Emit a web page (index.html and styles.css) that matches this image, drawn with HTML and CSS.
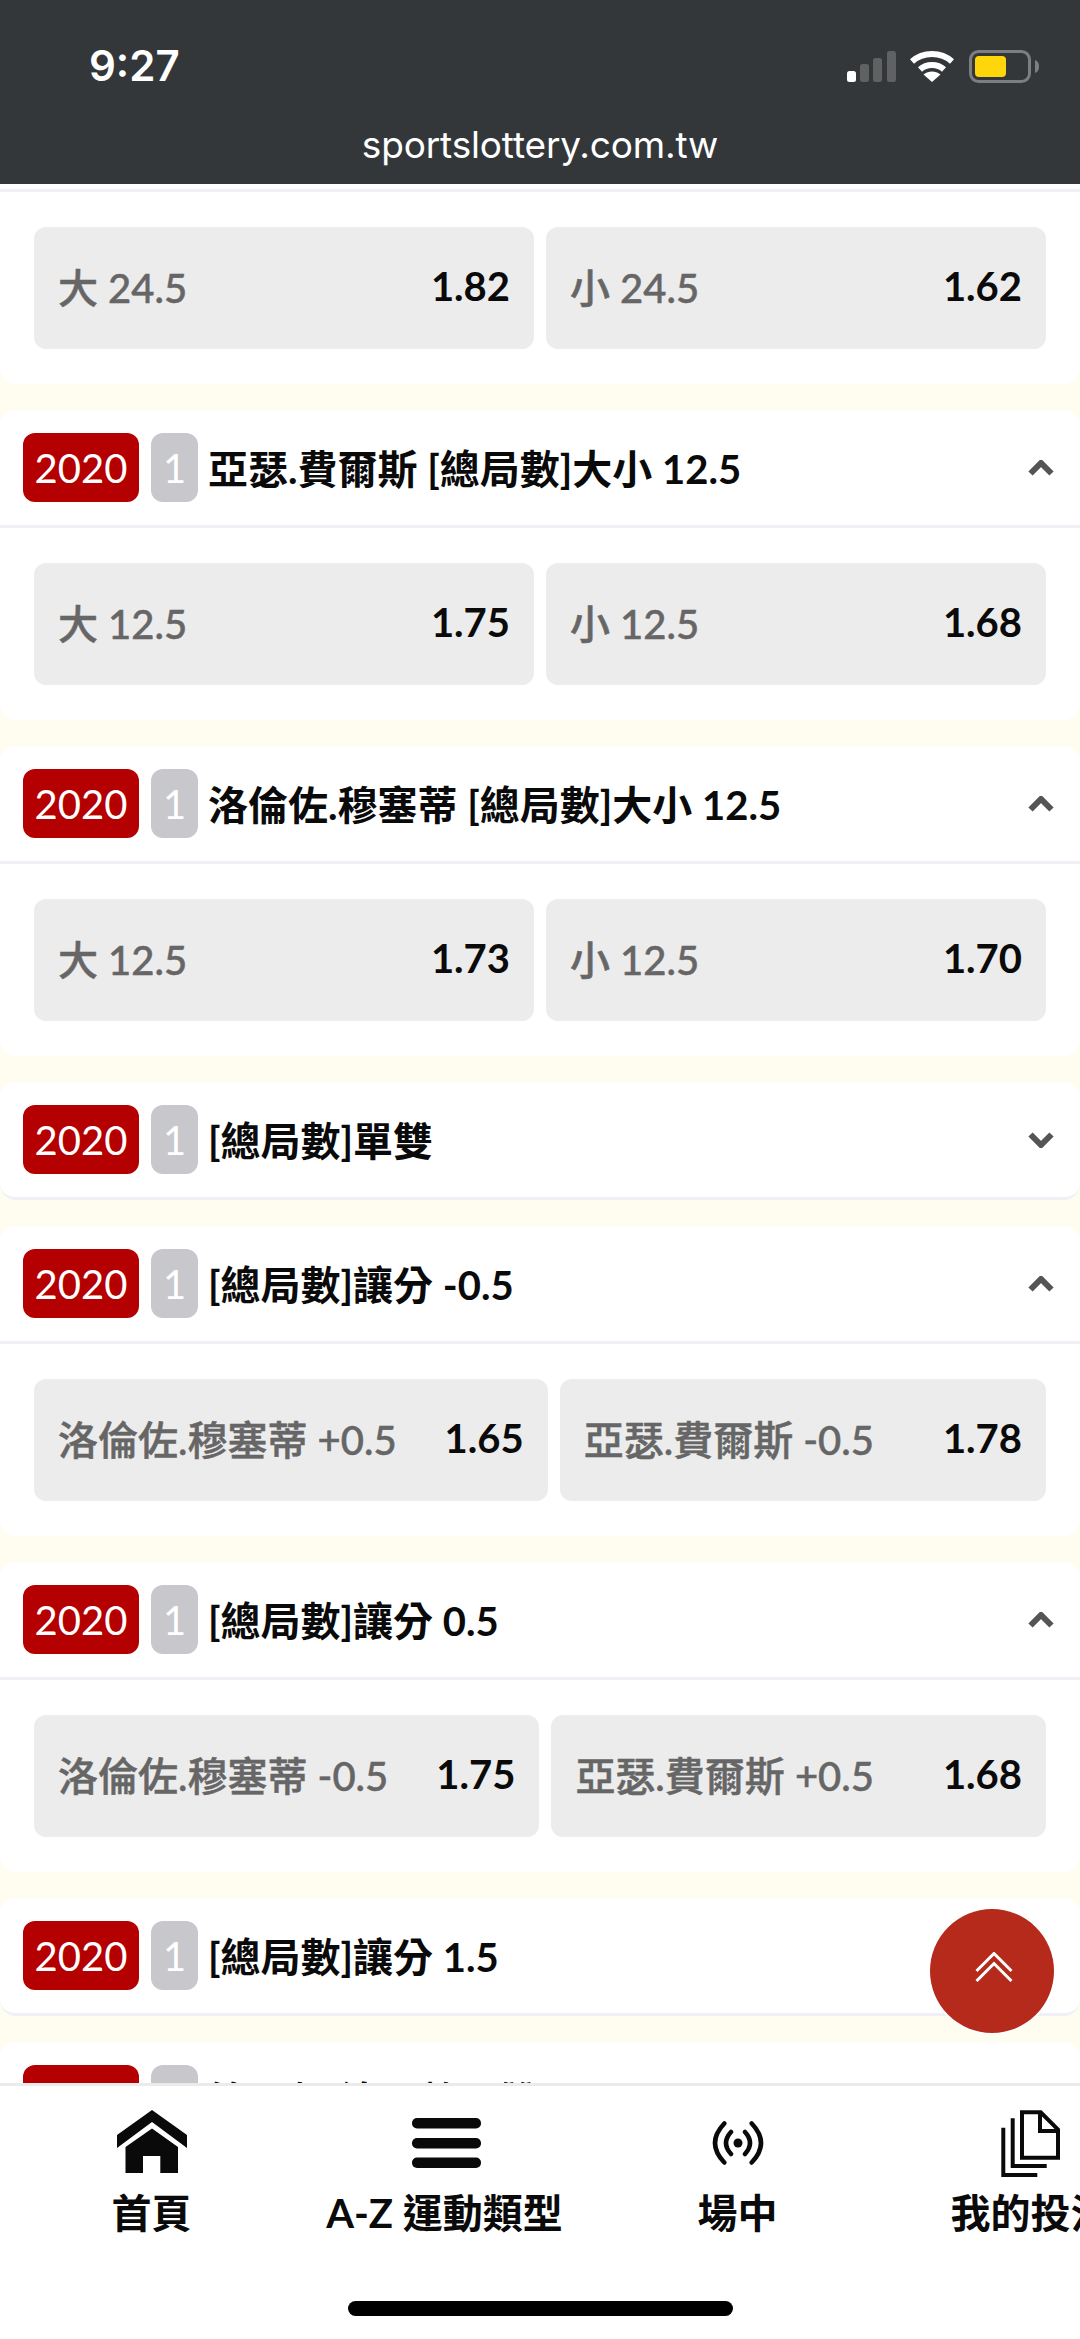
FILE: index.html
```html
<!DOCTYPE html>
<html lang="zh-Hant">
<head>
<meta charset="utf-8">
<title>sportslottery.com.tw</title>
<link rel="stylesheet" href="styles.css">
</head>
<body>
<div class="screen">
  <header class="browser-bar">
    <div class="status">
      <span class="clock">9:27</span>
      <div class="status-icons">
        <svg class="signal" viewBox="0 0 49 31" width="49" height="31">
          <rect x="0" y="20" width="9" height="11" rx="2.5" fill="#fff"/>
          <rect x="13" y="13" width="9" height="18" rx="2.5" fill="#5f6163"/>
          <rect x="26" y="7" width="9" height="24" rx="2.5" fill="#5f6163"/>
          <rect x="40" y="0" width="9" height="31" rx="2.5" fill="#5f6163"/>
        </svg>
        <svg class="wifi" viewBox="0 0 44 32" width="44" height="32">
          <path d="M2 11.5C13 1.5 31 1.5 42 11.5" fill="none" stroke="#fff" stroke-width="6"/>
          <path d="M10 19.5C16.500 13.500 27.500 13.500 34 19.500" fill="none" stroke="#fff" stroke-width="6"/>
          <path d="M22 32L13.500 24.500C18.500 20.500 25.500 20.500 30.500 24.500Z" fill="#fff"/>
        </svg>
        <svg class="battery" viewBox="0 0 70 33" width="70" height="33">
          <rect x="1.500" y="1.500" width="59" height="30" rx="8" fill="none" stroke="#7c7e80" stroke-width="3"/>
          <rect x="6" y="6" width="31" height="21" rx="4" fill="#ffd60a"/>
          <path d="M66 10C69 11 70 13.500 70 16.500C70 19.500 69 22 66 23Z" fill="#7c7e80"/>
        </svg>
      </div>
    </div>
    <div class="address">sportslottery.com.tw</div>
  </header>

  <main class="market-list">
    <section class="market market-cut">
      <div class="odds-row">
        <button class="pick"><span class="pick-label">大 24.5</span><span class="pick-odds">1.82</span></button>
        <button class="pick"><span class="pick-label">小 24.5</span><span class="pick-odds">1.62</span></button>
      </div>
    </section>

    <section class="market">
      <div class="market-head">
        <span class="tag tag-year">2020</span><span class="tag tag-set">1</span>
        <h2 class="market-title">亞瑟.費爾斯 [總局數]大小 12.5</h2>
        <svg class="caret" viewBox="0 0 26 16" width="26" height="16"><path d="M2.500 13.500L13 3L23.500 13.500"/></svg>
      </div>
      <div class="odds-row">
        <button class="pick"><span class="pick-label">大 12.5</span><span class="pick-odds">1.75</span></button>
        <button class="pick"><span class="pick-label">小 12.5</span><span class="pick-odds">1.68</span></button>
      </div>
    </section>

    <section class="market">
      <div class="market-head">
        <span class="tag tag-year">2020</span><span class="tag tag-set">1</span>
        <h2 class="market-title">洛倫佐.穆塞蒂 [總局數]大小 12.5</h2>
        <svg class="caret" viewBox="0 0 26 16" width="26" height="16"><path d="M2.500 13.500L13 3L23.500 13.500"/></svg>
      </div>
      <div class="odds-row">
        <button class="pick"><span class="pick-label">大 12.5</span><span class="pick-odds">1.73</span></button>
        <button class="pick"><span class="pick-label">小 12.5</span><span class="pick-odds">1.70</span></button>
      </div>
    </section>

    <section class="market">
      <div class="market-head">
        <span class="tag tag-year">2020</span><span class="tag tag-set">1</span>
        <h2 class="market-title">[總局數]單雙</h2>
        <svg class="caret" viewBox="0 0 26 16" width="26" height="16"><path d="M2.500 2.500L13 13L23.500 2.500"/></svg>
      </div>
    </section>

    <section class="market">
      <div class="market-head">
        <span class="tag tag-year">2020</span><span class="tag tag-set">1</span>
        <h2 class="market-title">[總局數]讓分 -0.5</h2>
        <svg class="caret" viewBox="0 0 26 16" width="26" height="16"><path d="M2.500 13.500L13 3L23.500 13.500"/></svg>
      </div>
      <div class="odds-row">
        <button class="pick"><span class="pick-label">洛倫佐.穆塞蒂 +0.5</span><span class="pick-odds">1.65</span></button>
        <button class="pick"><span class="pick-label">亞瑟.費爾斯 -0.5</span><span class="pick-odds">1.78</span></button>
      </div>
    </section>

    <section class="market">
      <div class="market-head">
        <span class="tag tag-year">2020</span><span class="tag tag-set">1</span>
        <h2 class="market-title">[總局數]讓分 0.5</h2>
        <svg class="caret" viewBox="0 0 26 16" width="26" height="16"><path d="M2.500 13.500L13 3L23.500 13.500"/></svg>
      </div>
      <div class="odds-row">
        <button class="pick"><span class="pick-label">洛倫佐.穆塞蒂 -0.5</span><span class="pick-odds">1.75</span></button>
        <button class="pick"><span class="pick-label">亞瑟.費爾斯 +0.5</span><span class="pick-odds">1.68</span></button>
      </div>
    </section>

    <section class="market">
      <div class="market-head">
        <span class="tag tag-year">2020</span><span class="tag tag-set">1</span>
        <h2 class="market-title">[總局數]讓分 1.5</h2>
      </div>
    </section>

    <section class="market">
      <div class="market-head">
        <span class="tag tag-year">2020</span><span class="tag tag-set">1</span>
        <h2 class="market-title">第一盤 總局數單雙</h2>
      </div>
    </section>

    <button class="to-top" aria-label="top">
      <svg viewBox="0 0 38 30" width="38" height="30">
        <path d="M1.500 19L19 1.500L36.500 19"/>
        <path d="M1.500 29L19 11.500L36.500 29"/>
      </svg>
    </button>
  </main>

  <nav class="tabbar">
    <div class="tabs">
      <a class="tab">
        <svg class="tab-icon" viewBox="0 0 70 66" width="70" height="66">
          <path d="M35 0L70 25V38L35 12L0 38V25Z" fill="#0a0a0a"/>
          <path d="M35 18.500L8.500 37V63H26V46H43.300V63H61V37Z" fill="#0a0a0a"/>
        </svg>
        <span class="tab-label">首頁</span>
      </a>
      <a class="tab">
        <svg class="tab-icon tab-icon-menu" viewBox="0 0 69 50" width="69" height="50">
          <rect y="0" width="69" height="10.500" rx="5" fill="#0a0a0a"/>
          <rect y="20" width="69" height="10.500" rx="5" fill="#0a0a0a"/>
          <rect y="39.500" width="69" height="10.500" rx="5" fill="#0a0a0a"/>
        </svg>
        <span class="tab-label">A-Z 運動類型</span>
      </a>
      <a class="tab">
        <svg class="tab-icon" viewBox="0 0 52 44" width="52" height="44">
          <circle cx="26" cy="22" r="4.500" fill="#0a0a0a"/>
          <path d="M19 11Q9 22 19 33M33 11Q43 22 33 33M12.300 2.500Q-6.300 22 12.300 41.500M39.700 2.500Q58.300 22 39.700 41.500" fill="none" stroke="#0a0a0a" stroke-width="4.500" stroke-linecap="round"/>
        </svg>
        <span class="tab-label">場中</span>
      </a>
      <a class="tab">
        <svg class="tab-icon" viewBox="0 0 59 69" width="59" height="69">
          <path d="M21 3.300H39.700L57 20.500V48.700H21Z" fill="none" stroke="#0a0a0a" stroke-width="4"/>
          <path d="M39 3.300V22H57" fill="none" stroke="#0a0a0a" stroke-width="4"/>
          <path d="M11.700 9.300V57H45.700" fill="none" stroke="#0a0a0a" stroke-width="4"/>
          <path d="M2.300 18.700V66H36.300" fill="none" stroke="#0a0a0a" stroke-width="4"/>
        </svg>
        <span class="tab-label">我的投注</span>
      </a>
    </div>
    <div class="home-bar"></div>
  </nav>
</div>
</body>
</html>
```
FILE: styles.css
```css
* {
  box-sizing: border-box;
}

html,
body {
  margin: 0;
  padding: 0;
  background: #fff;
}

.screen {
  display: flex;
  flex-direction: column;
  width: 1080px;
  height: 2339px;
  overflow: hidden;
  font-family: Lato, "Noto Sans CJK TC", sans-serif;
}

/* Browser chrome */
.browser-bar {
  flex: 0 0 184px;
  background: #34373a;
  color: #fff;
  font-family: Inter, sans-serif;
}

.status {
  display: flex;
  align-items: flex-start;
  justify-content: space-between;
  padding: 50px 41px 0 89px;
  height: 121px;
}

.clock {
  font-size: 42px;
  font-weight: 600;
  line-height: 32px;
}

.status-icons {
  display: flex;
  align-items: flex-start;
  gap: 14px;
}

.signal {
  margin-top: 1px;
}

.battery {
  margin-left: 1px;
}

.address {
  font-size: 37px;
  letter-spacing: -0.15px;
  line-height: 44px;
  text-align: center;
  margin-top: 2px;
}

/* Market list */
.market-list {
  position: relative;
  flex: 1 1 auto;
  min-height: 0;
  overflow: hidden;
  display: flex;
  flex-direction: column;
  gap: 26px;
  background: #fffcf0;
}

.market {
  flex: none;
  background: #fff;
  border-radius: 16px;
}

.market-cut {
  border-top: 3px solid #f0eff5;
  box-shadow: 0 -5px 0 #fff;
  margin-top: 5px;
  border-radius: 0 0 16px 16px;
}

.market-head {
  display: flex;
  align-items: center;
  height: 118px;
  padding: 0 26px 0 23px;
  border-bottom: 3px solid #f0eff5;
}

.market-head:last-child {
  border-radius: 0 0 16px 16px;
}

.tag {
  display: flex;
  align-items: center;
  justify-content: center;
  height: 69px;
  border-radius: 12px;
  color: #fff;
  font-size: 40px;
}

.tag-year {
  width: 116px;
  background: #b40000;
}

.tag-set {
  width: 47px;
  margin-left: 12px;
  background: #c7c7cc;
}

.market-title {
  flex: 1 1 auto;
  margin: 0 0 2px 10px;
  font-size: 40px;
  font-weight: 700;
  color: #0a0a0a;
  white-space: nowrap;
}

.caret {
  flex: none;
  fill: none;
  stroke: #555;
  stroke-width: 6;
}

.odds-row {
  display: flex;
  gap: 12px;
  padding: 35px 34px;
}

/* Equal split unless a label needs more room than half the row */
.pick {
  flex: 1 1 0;
  display: flex;
  align-items: center;
  justify-content: space-between;
  gap: 48px;
  height: 122px;
  padding: 0 24px 4px;
  border: 0;
  border-radius: 12px;
  background: #ececec;
  font-family: inherit;
  font-size: 40px;
  white-space: nowrap;
}

.pick-label {
  color: #666;
  font-weight: 500;
  -webkit-text-stroke: 0.5px #666;
}

.pick-odds {
  color: #0a0a0a;
  font-weight: 700;
}

/* Floating back-to-top control */
.to-top {
  position: absolute;
  top: 1725px;
  left: 930px;
  display: flex;
  align-items: center;
  justify-content: center;
  width: 124px;
  height: 124px;
  padding: 0;
  border: 0;
  border-radius: 50%;
  background: #b52a1a;
  box-shadow: 0 0 0 2px #fff;
}

.to-top svg {
  margin: 0 0 8px 4px;
  fill: none;
  stroke: #fff;
  stroke-width: 3;
}

/* Bottom navigation */
.tabbar {
  flex: 0 0 256px;
  background: #fff;
  border-top: 3px solid #ebebeb;
  overflow: hidden;
}

.tabs {
  display: grid;
  grid-auto-flow: column;
  grid-auto-columns: 293px;
  padding: 22px 0 0 5px;
}

.tab {
  display: grid;
  grid-template-rows: 70px 50px;
  row-gap: 10px;
  justify-items: center;
  align-items: center;
  color: #0a0a0a;
}

.tab-icon-menu {
  margin-left: 4px;
}

.tab-label {
  font-size: 40px;
  font-weight: 700;
  line-height: 50px;
  white-space: nowrap;
}

.home-bar {
  width: 385px;
  height: 15px;
  margin: 63px auto 0;
  border-radius: 8px;
  background: #000;
}
```
